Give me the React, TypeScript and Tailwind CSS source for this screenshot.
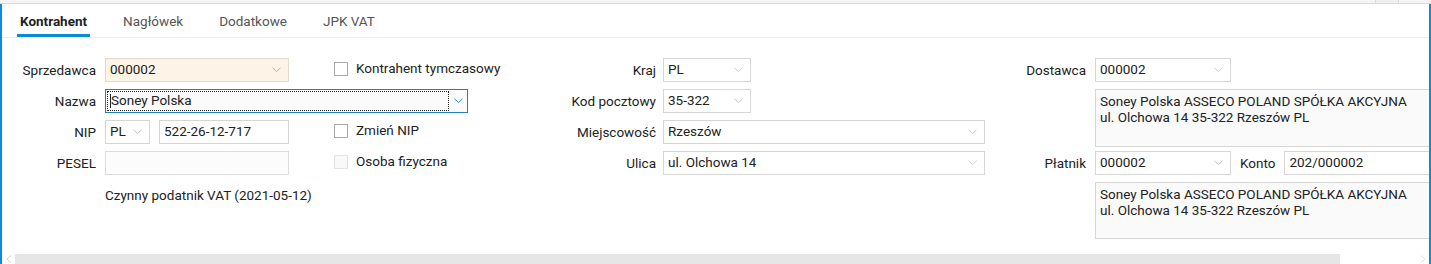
import React from 'react';

const font = { fontFamily: 'Roboto, "Liberation Sans", sans-serif' };

function Chevron({ color = '#c4c4c4' }: { color?: string }) {
  return (
    <svg width="9" height="6" viewBox="0 0 9 6" className="shrink-0">
      <polyline points="0.5,0.8 4.5,4.6 8.5,0.8" fill="none" stroke={color} strokeWidth="1" />
    </svg>
  );
}

function Select({ value, w, tone = 'plain' }: { value: string; w: string; tone?: 'plain' | 'warm' }) {
  const warm = tone === 'warm';
  return (
    <div
      className={`h-[24px] ${w} shrink-0 flex items-center justify-between pl-[4px] pr-[7px] border ${
        warm ? 'bg-[#fdf4e7] border-[#e2dacd]' : 'bg-white border-[#d6d6d6]'
      }`}
    >
      <span className="text-[13.5px] text-[#222] leading-none whitespace-nowrap">{value}</span>
      <Chevron color={warm ? '#e0a48a' : '#c9c9c9'} />
    </div>
  );
}

function Input({ value = '', w, disabled }: { value?: string; w: string; disabled?: boolean }) {
  return (
    <div
      className={`h-[24px] ${w} shrink-0 flex items-center px-[4px] border ${
        disabled ? 'bg-[#fcfcfc] border-[#dcdcdc]' : 'bg-white border-[#d6d6d6]'
      }`}
    >
      <span className="text-[13.5px] text-[#222] leading-none whitespace-nowrap">{value}</span>
    </div>
  );
}

function Check({ label, disabled }: { label: string; disabled?: boolean }) {
  return (
    <div className="flex items-center gap-[8px] h-[24px] -mt-[2px]">
      <span
        className={`shrink-0 w-[14px] h-[14px] border ${
          disabled ? 'border-[#e4e4e4] bg-[#f9f9f9]' : 'border-[#a9a9a9] bg-white'
        }`}
      />
      <span className="text-[13.5px] text-[#222] leading-none whitespace-nowrap">{label}</span>
    </div>
  );
}

function Label({ children, className = '' }: { children: React.ReactNode; className?: string }) {
  return (
    <span className={`block text-[13.5px] text-[#222] text-right whitespace-nowrap leading-[24px] ${className}`}>
      {children}
    </span>
  );
}

function Memo({ h }: { h: string }) {
  return (
    <div className={`${h} w-[345px] border border-[#d6d6d6] bg-[#fafafa] px-[4px] pt-[3px] text-[13.5px] leading-[16px] text-[#222]`}>
      <div className="whitespace-nowrap">Soney Polska ASSECO POLAND SPÓŁKA AKCYJNA</div>
      <div className="whitespace-nowrap">ul. Olchowa 14 35-322 Rzeszów PL</div>
    </div>
  );
}

export default function App() {
  const tabs = ['Kontrahent', 'Nagłówek', 'Dodatkowe', 'JPK VAT'];

  return (
    <div style={font} className="w-[1431px] h-[264px] bg-white flex flex-col overflow-hidden">
      {/* top strip */}
      <div className="h-[4px] bg-[#f6f4f2] border-b border-[#dedbd7] flex justify-end shrink-0">
        <div className="w-[24px] bg-[#efefef] border-l border-r border-[#dedbd7] mr-[32px]" />
      </div>

      <div className="flex-1 flex flex-col border-l-2 border-r-2 border-[#0c8bd8] overflow-hidden">
        {/* tabs */}
        <div className="h-[34px] border-b border-[#ececec] flex items-end pl-[15px] gap-[30px] shrink-0">
          {tabs.map((t, i) => (
            <div
              key={t}
              className={`px-[3px] h-[31px] flex items-start pt-[9px] text-[13.5px] leading-none border-b-[3px] ${
                i === 0 ? 'border-[#0b8bd6] text-[#222] font-bold' : 'border-transparent text-[#555]'
              }`}
            >
              {t}
            </div>
          ))}
        </div>

        {/* form */}
        <div className="flex pt-[20px] items-start">
          {/* left section */}
          <div className="grid grid-cols-[94px_184px_27px_160px] gap-x-[9px] gap-y-[7px] items-center">
            <Label>Sprzedawca</Label>
            <Select value="000002" w="w-[184px]" tone="warm" />
            <span />
            <Check label="Kontrahent tymczasowy" />

            <Label>Nazwa</Label>
            <div className="col-span-3 h-[24px] w-[363px] border border-[#1f7fc2] bg-[#fbfbfb] flex items-stretch">
              <div className="flex-1 m-[1px] mr-0 border border-dotted border-[#222] flex items-center pl-[2px]">
                <span className="w-px h-[14px] bg-[#222]" />
                <span className="text-[13.5px] text-[#222] leading-none">Soney Polska</span>
              </div>
              <div className="w-[18px] flex items-center justify-center">
                <Chevron color="#1f7fc2" />
              </div>
            </div>

            <Label>NIP</Label>
            <div className="flex gap-[9px]">
              <Select value="PL" w="w-[45px]" />
              <Input value="522-26-12-717" w="w-[130px]" />
            </div>
            <span />
            <Check label="Zmień NIP" />

            <Label>PESEL</Label>
            <Input w="w-[184px]" disabled />
            <span />
            <Check label="Osoba fizyczna" disabled />

            <span />
            <div className="col-span-3 pt-[1px] text-[13.5px] text-[#222] leading-[24px]">Czynny podatnik VAT (2021-05-12)</div>
          </div>

          {/* middle section */}
          <div className="ml-[46px] grid grid-cols-[116px_322px] gap-x-[7px] gap-y-[7px] items-center">
            <Label>Kraj</Label>
            <Select value="PL" w="w-[88px]" />
            <Label>Kod pocztowy</Label>
            <Select value="35-322" w="w-[88px]" />
            <Label>Miejscowość</Label>
            <Select value="Rzeszów" w="w-[322px]" />
            <Label>Ulica</Label>
            <Select value="ul. Olchowa 14" w="w-[322px]" />
          </div>

          {/* right section */}
          <div className="ml-[15px] grid grid-cols-[86px_auto] gap-x-[9px] items-start">
            <Label>Dostawca</Label>
            <Select value="000002" w="w-[136px]" />
            <span />
            <div className="mt-[7px] flex">
              <Memo h="h-[58px]" />
            </div>
            <Label className="mt-[4px]">Płatnik</Label>
            <div className="mt-[4px] flex items-center gap-[9px]">
              <Select value="000002" w="w-[136px]" />
              <span className="text-[13.5px] text-[#222] leading-[24px]">Konto</span>
              <Input value="202/000002" w="w-[160px]" />
            </div>
            <span />
            <div className="mt-[7px] flex">
              <Memo h="h-[57px]" />
            </div>
          </div>
        </div>

        {/* scrollbar */}
        <div className="mt-auto h-[10px] flex items-center shrink-0">
          <div className="w-[13px] flex justify-center">
            <svg width="6" height="8" viewBox="0 0 6 8">
              <polyline points="5,0.5 1,4 5,7.5" fill="none" stroke="#d0d0d0" strokeWidth="1" />
            </svg>
          </div>
          <div className="h-[10px] w-[1325px] bg-[#e6e6e6]" />
          <div className="flex-1 flex justify-end pr-[3px]">
            <svg width="6" height="8" viewBox="0 0 6 8">
              <polyline points="1,0.5 5,4 1,7.5" fill="none" stroke="#e0e0e0" strokeWidth="1" />
            </svg>
          </div>
        </div>
      </div>
    </div>
  );
}
